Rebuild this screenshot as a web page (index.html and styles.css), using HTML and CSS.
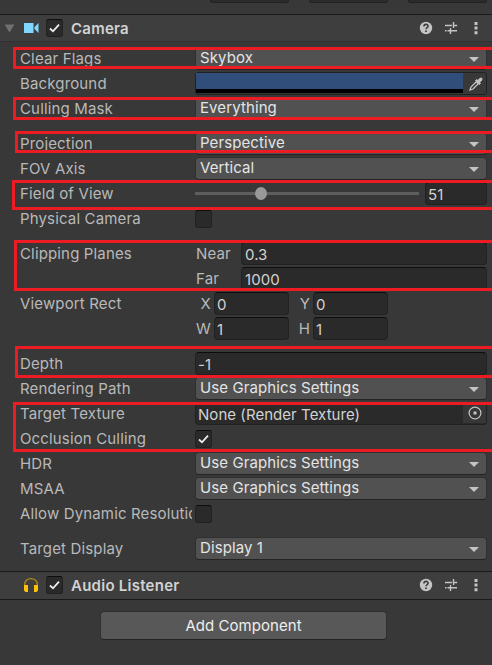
FILE: index.html
```
<!DOCTYPE html>
<html lang="en">
<head>
<meta charset="utf-8">
<title>Inspector</title>
<link rel="stylesheet" href="styles.css">
</head>
<body>
<svg class="defs" width="0" height="0">
  <symbol id="check" viewBox="0 0 17 18"><path d="M4 9.5 7 12.3 13 5.6" fill="none" stroke="#eee" stroke-width="1.8"/></symbol>
  <symbol id="tools" viewBox="0 0 64 16">
    <circle cx="8" cy="8" r="6.2" fill="#c4c4c4"/>
    <path d="M5.9 6.5C5.9 3.6 10.2 3.8 10.1 6.2 10 7.5 8 7.7 8 9.3" fill="none" stroke="#3e3e3e" stroke-width="1.6"/>
    <path d="M7.1 10.4h1.8v1.7H7.1z" fill="#3e3e3e"/>
    <path d="M27 5.5h7M35.6 5.5h3.6M35.5 2v6M27 10.7h1.5M29.5 10.7h2.5M32.5 8v6M33 10.7h6" fill="none" stroke="#c4c4c4" stroke-width="1.4"/>
    <path d="M56.5 2h3v3h-3zM56.5 6.6h3v3h-3zM56.5 11.2h3v3h-3z" fill="#c4c4c4"/>
  </symbol>
</svg>
<main class="inspector">
  <div class="top"><i></i><i></i><i></i></div>
  <header class="head">
    <svg class="fold" viewBox="0 0 12 10"><path d="M0.5 .5h11L6 9.5z" fill="#707070"/></svg>
    <svg class="icon" viewBox="0 0 16 16"><path d="M1 3h9.5v10H1zM11.5 7 15.500 3v10l-4-4z" fill="#80d6fd"/></svg>
    <span class="box"><svg><use href="#check"/></svg></span>
    <h2>Camera</h2>
    <svg class="tools"><use href="#tools"/></svg>
  </header>
  <section class="props">
    <div class="row"><label>Clear Flags</label><div class="drop">Skybox</div></div>
    <div class="row"><label>Background</label><div class="color"><span></span>
      <svg viewBox="0 0 14 14"><path d="M1 13 2 10 7.300 4.700 9.300 6.700 4 12z" fill="none" stroke="#c4c4c4" stroke-width="1.300"/><path d="M6.500 3.500 7.800 2.600 8.900 3.500 11 1.200 12.900 1.200 12.900 3.100 10.600 5.200 11.400 6.300 10.500 7.500z" fill="#c4c4c4" stroke="#c4c4c4" stroke-width="1"/></svg></div></div>
    <div class="row"><label>Culling Mask</label><div class="drop">Everything</div></div>
    <div class="row gap"><label>Projection</label><div class="drop">Perspective</div></div>
    <div class="row"><label>FOV Axis</label><div class="drop">Vertical</div></div>
    <div class="row"><label>Field of View</label><div class="slider"><i></i><b></b><i class="rest"></i></div><div class="field short">51</div></div>
    <div class="row"><label>Physical Camera</label><span class="box"></span></div>
    <div class="row gap"><label>Clipping Planes</label><span class="sub">Near</span><div class="field wide">0.3</div></div>
    <div class="row"><label></label><span class="sub">Far</span><div class="field wide">1000</div></div>
    <div class="row"><label>Viewport Rect</label><span class="axis">X</span><div class="field num">0</div><span class="axis second">Y</span><div class="field num">0</div></div>
    <div class="row"><label></label><span class="axis">W</span><div class="field num">1</div><span class="axis second">H</span><div class="field num">1</div></div>
    <div class="row gap"><label>Depth</label><div class="field">-1</div></div>
    <div class="row"><label>Rendering Path</label><div class="drop">Use Graphics Settings</div></div>
    <div class="row"><label>Target Texture</label><div class="field object">None (Render Texture)<span><svg viewBox="0 0 14 14"><circle cx="7" cy="7" r="5.900" fill="none" stroke="#c4c4c4" stroke-width="1.200"/><path d="M5.500 5.500h3v3h-3z" fill="#c4c4c4"/></svg></span></div></div>
    <div class="row"><label>Occlusion Culling</label><span class="box"><svg><use href="#check"/></svg></span></div>
    <div class="row"><label>HDR</label><div class="drop">Use Graphics Settings</div></div>
    <div class="row"><label>MSAA</label><div class="drop">Use Graphics Settings</div></div>
    <div class="row"><label>Allow Dynamic Resolution</label><span class="box"></span></div>
    <div class="row gap"><label>Target Display</label><div class="drop">Display 1</div></div>
  </section>
  <header class="head audio">
    <span class="fold"></span>
    <svg class="icon" viewBox="0 0 16 16"><path d="M1.700 9V7.500C1.700-.4 14.300-.4 14.300 7.500V9" fill="none" stroke="#b58a12" stroke-width="1.300"/><path d="M1 8h4v7H2.500L1 13.500zM11 8h4v5.500L13.500 15H11z" fill="#ffc107"/></svg>
    <span class="box"><svg><use href="#check"/></svg></span>
    <h2>Audio Listener</h2>
    <svg class="tools"><use href="#tools"/></svg>
  </header>
  <div class="add"><button>Add Component</button></div>
  <div class="mark clear"></div>
  <div class="mark culling"></div>
  <div class="mark projection"></div>
  <div class="mark fov"></div>
  <div class="mark clipping"></div>
  <div class="mark depth"></div>
  <div class="mark texture"></div>
</main>
</body>
</html>
```
FILE: styles.css
```
* { box-sizing: border-box; }
body { margin: 0; background: #383838; }
.defs { position: absolute; }
.inspector {
  position: relative;
  width: 492px;
  height: 665px;
  overflow: hidden;
  background: #383838;
  color: #b9b9b9;
  font: 15px/25px Inter, sans-serif;
  letter-spacing: .15px;
}
.top { display: flex; gap: 20px; height: 14px; padding-left: 210px; }
.top i { width: 79px; height: 3px; background: #2b2b2b; border: 1px solid #222; border-top: 0; border-radius: 0 0 4px 4px; }
.head {
  display: flex;
  align-items: center;
  height: 28px;
  padding: 0 10px 0 4px;
  background: #3e3e3e;
  border-top: 1px solid #1a1a1a;
  border-bottom: 1px solid #303030;
}
.fold { width: 11px; height: 9px; }
.icon { width: 16px; height: 16px; margin: 0 7px 0 8px; }
.head h2 { margin: 1px auto 0 8px; font-size: 15px; font-weight: 600; color: #d2d2d2; line-height: 26px; letter-spacing: .25px; }
.tools { width: 64px; height: 16px; }
.box { flex: none; width: 17px; height: 18px; background: #2a2a2a; border: 1px solid #212121; border-top-color: #0d0d0d; border-radius: 3px; }
.box svg { display: block; width: 17px; height: 18px; margin: -1px; }
.props { padding-top: 4px; height: 529px; }
.row { display: flex; align-items: center; height: 25px; padding: 0 5px 0 20px; }
.gap { margin-top: 10px; }
label { flex: none; width: 172px; margin-right: 3px; height: 25px; overflow: hidden; white-space: nowrap; }
.drop {
  display: flex;
  flex: 1;
  align-items: center;
  justify-content: space-between;
  height: 23px;
  padding: 0 7px 2px 4px;
  background: #515151;
  border: 1px solid #303030;
  border-bottom-color: #242424;
  border-radius: 4px;
  color: #e4e4e4;
  letter-spacing: .1px;
}
.drop::after { content: ""; margin-top: 4px; border: 5px solid transparent; border-top-color: #c4c4c4; border-bottom: 0; }
.color { display: flex; flex: 1; height: 23px; border: 1px solid #212121; border-radius: 3px; }
.color span { width: 267px; height: 20px; background: #314d79; border-bottom: 4px solid #000; }
.color svg { width: 14px; height: 14px; margin: 4px 0 0 6px; }
.slider { display: flex; align-items: center; width: 224px; margin-right: 6px; height: 15px; }
.slider i { width: 60px; height: 3px; background: #5e5e5e; }
.slider b { width: 12px; height: 13px; border-radius: 50%; background: #999; }
.slider .rest { flex: 1; }
.field {
  flex: 1;
  height: 23px;
  padding-left: 2px;
  line-height: 23px;
  background: #2a2a2a;
  border: 1px solid #212121;
  border-top-color: #0d0d0d;
  border-radius: 4px;
  color: #d2d2d2;
  letter-spacing: .05px;
}
.wide { padding-left: 3px; }
.sub { width: 46px; padding-left: 1px; }
.axis { width: 19px; padding-right: 3px; text-align: right; }
.second { width: 24px; }
.num { flex: none; width: 75px; }
.object { display: flex; justify-content: space-between; }
.object span { display: flex; align-items: center; justify-content: center; width: 23px; height: 20px; background: #373737; }
.object svg { width: 14px; height: 14px; }
.audio { height: 29px; padding-bottom: 1px; border-bottom-color: #1a1a1a; }
.add { display: flex; justify-content: center; padding: 11px 5px 0 0; }
.add button { width: 287px; height: 29px; padding: 0; background: #585858; border: 1px solid #303030; border-bottom-color: #242424; border-radius: 4px; color: #eee; font: inherit; letter-spacing: .05px; }
.mark { position: absolute; right: -3px; border: 3px solid #ed1c24; }
.clear { left: 13px; top: 47px; height: 22px; }
.culling { left: 13px; top: 97px; height: 23px; }
.projection { left: 15px; top: 131px; height: 22px; }
.fov { left: 12px; top: 180px; height: 30px; }
.clipping { left: 14px; top: 240px; height: 51px; }
.depth { left: 15px; top: 346px; height: 32px; }
.texture { left: 13px; top: 402px; height: 50px; }
```
